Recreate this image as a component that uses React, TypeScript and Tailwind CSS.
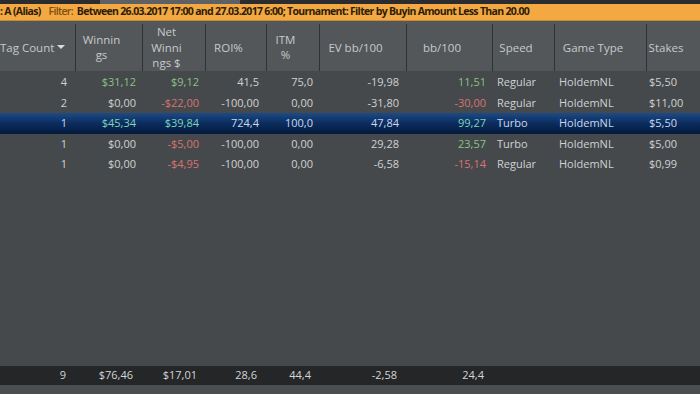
import React from 'react';

type Row = {
  count: string;
  win: string;
  net: string;
  roi: string;
  itm: string;
  ev: string;
  bb: string;
  speed: string;
  game: string;
  stakes: string;
  selected?: boolean;
};

const rows: Row[] = [
  { count: '4', win: '$31,12', net: '$9,12', roi: '41,5', itm: '75,0', ev: '-19,98', bb: '11,51', speed: 'Regular', game: 'HoldemNL', stakes: '$5,50' },
  { count: '2', win: '$0,00', net: '-$22,00', roi: '-100,00', itm: '0,00', ev: '-31,80', bb: '-30,00', speed: 'Regular', game: 'HoldemNL', stakes: '$11,00' },
  { count: '1', win: '$45,34', net: '$39,84', roi: '724,4', itm: '100,0', ev: '47,84', bb: '99,27', speed: 'Turbo', game: 'HoldemNL', stakes: '$5,50', selected: true },
  { count: '1', win: '$0,00', net: '-$5,00', roi: '-100,00', itm: '0,00', ev: '29,28', bb: '23,57', speed: 'Turbo', game: 'HoldemNL', stakes: '$5,00' },
  { count: '1', win: '$0,00', net: '-$4,95', roi: '-100,00', itm: '0,00', ev: '-6,58', bb: '-15,14', speed: 'Regular', game: 'HoldemNL', stakes: '$0,99' },
];

const cols = 'grid grid-cols-[76px_67px_63px_61px_53px_87px_86px_62px_92px_1fr]';

// money colour: green for positive, red for negative, plain for zero
const tone = (v: string, selected?: boolean) => {
  if (v.startsWith('-')) return 'text-[#d8736f]';
  if (/^\$?0,00$/.test(v)) return '';
  return selected ? 'text-[#7fd4b4]' : 'text-[#86c482]';
};

const HeaderCell = ({ children }: { children: React.ReactNode }) => (
  <div className="flex items-center justify-center text-center leading-[15.5px] pr-[15px] border-r border-[#2f3235] my-[3px]">
    <div>{children}</div>
  </div>
);

export default function App() {
  return (
    <div
      className="w-[700px] h-[394px] overflow-hidden bg-[#46494c] text-[11px] text-[#cfd1d3] flex flex-col"
      style={{ fontFamily: '"Open Sans", "Noto Sans", sans-serif' }}
    >
      {/* top tab strip */}
      <div className="h-[4px] flex shrink-0 bg-[#2a2c2f]">
        <div className="w-[100px]" />
        <div className="w-[140px] bg-[#5d6164]" />
      </div>

      {/* filter bar */}
      <div className="h-[17px] shrink-0 bg-[#f3a841] border-b border-[#c98a33] flex items-center whitespace-nowrap text-[10.5px] tracking-[-0.68px] text-[#2b1d08]">
        <span className="font-bold">: A (Alias)</span>
        <span className="ml-[8px] text-[#7a4e12] font-semibold">Filter:</span>
        <span className="ml-[4px] font-bold">
          Between 26.03.2017 17:00 and 27.03.2017 6:00; Tournament: Filter by Buyin Amount Less Than 20.00
        </span>
      </div>

      {/* column headers */}
      <div className={`${cols} h-[50px] shrink-0 bg-[#53575a] text-[11.5px] text-[#c7c9cb]`}>
        <div className="flex items-center justify-between pr-[10px] border-r border-[#2f3235] my-[3px]">
          <span>Tag Count</span>
          <span className="w-0 h-0 border-l-[4px] border-r-[4px] border-t-[4px] border-l-transparent border-r-transparent border-t-[#d9dbdd]" />
        </div>
        <HeaderCell>Winnin<br />gs</HeaderCell>
        <HeaderCell>Net<br />Winni<br />ngs $</HeaderCell>
        <HeaderCell>ROI%</HeaderCell>
        <HeaderCell>ITM<br />%</HeaderCell>
        <HeaderCell>EV bb/100</HeaderCell>
        <HeaderCell>bb/100</HeaderCell>
        <HeaderCell>Speed</HeaderCell>
        <HeaderCell>Game Type</HeaderCell>
        <div className="flex items-center justify-center pr-[15px]">Stakes</div>
      </div>

      {/* rows */}
      <div className="flex-1 pt-[1px]">
        {rows.map((r, i) => (
          <div
            key={i}
            className={`${cols} h-[20.5px] items-center ${
              r.selected
                ? 'bg-gradient-to-b from-[#1d4b86] via-[#0b2c5e] to-[#051a3d] text-[#c9d8ee]'
                : ''
            }`}
          >
            <div className="text-right pr-[9px]">{r.count}</div>
            <div className={`text-right pr-[7px] ${tone(r.win, r.selected)}`}>{r.win}</div>
            <div className={`text-right pr-[7px] ${tone(r.net, r.selected)}`}>{r.net}</div>
            <div className="text-right pr-[8px]">{r.roi}</div>
            <div className="text-right pr-[7px]">{r.itm}</div>
            <div className="text-right pr-[8px]">{r.ev}</div>
            <div className={`text-right pr-[7px] ${tone(r.bb, r.selected)}`}>{r.bb}</div>
            <div className="pl-[4px]">{r.speed}</div>
            <div className="pl-[4px]">{r.game}</div>
            <div className="pl-[2px]">{r.stakes}</div>
          </div>
        ))}
      </div>

      {/* totals */}
      <div className={`${cols} h-[19px] shrink-0 items-center bg-[#242628] text-[#d3d5d7]`}>
        <div className="text-right pr-[10px]">9</div>
        <div className="text-right pr-[10px]">$76,46</div>
        <div className="text-right pr-[9px]">$17,01</div>
        <div className="text-right pr-[10px]">28,6</div>
        <div className="text-right pr-[9px]">44,4</div>
        <div className="text-right pr-[10px]">-2,58</div>
        <div className="text-right pr-[9px]">24,4</div>
        <div />
        <div />
        <div />
      </div>
      <div className="h-[9px] shrink-0 bg-[#4b4e51]" />
    </div>
  );
}
